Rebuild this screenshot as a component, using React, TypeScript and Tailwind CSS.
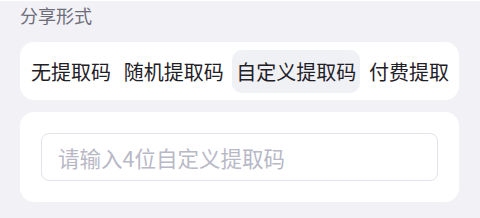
import { useState } from "react";

const TABS = ["无提取码", "随机提取码", "自定义提取码", "付费提取"];

export default function App() {
  const [active, setActive] = useState(2);
  const [code, setCode] = useState("");

  return (
    <div
      className="w-[480px] h-[218px] bg-[#f1f1f6] border-t border-white pl-5 pr-[21px] pt-[1px]"
      style={{ fontFamily: '"Noto Sans CJK SC", "Noto Sans", sans-serif' }}
    >
      {/* 标题 */}
      <div className="text-[18px] leading-[26px] text-[#6e6e7a]">分享形式</div>

      {/* 提取方式 */}
      <div className="mt-[14px] h-[58px] rounded-[14px] bg-white pl-[7px] pr-[6px] flex items-center justify-between">
        {TABS.map((t, i) => (
          <button
            key={t}
            onClick={() => setActive(i)}
            className={`h-[43px] px-[4px] rounded-[10px] text-[20px] leading-[43px] text-[#1f2026] ${
              active === i ? "bg-[#f0f1f5]" : ""
            }`}
          >
            {t}
          </button>
        ))}
      </div>

      {/* 输入提取码 */}
      <div className="mt-[12px] rounded-[14px] bg-white px-[21px] py-[21px]">
        <input
          value={code}
          onChange={(e) => setCode(e.target.value)}
          maxLength={4}
          placeholder="请输入4位自定义提取码"
          className="w-full h-[48px] rounded-[8px] border border-[#e2e2ea] px-[16px] text-[21.5px] text-[#1f2026] placeholder:text-[#b8b8c6] outline-none"
        />
      </div>
    </div>
  );
}
